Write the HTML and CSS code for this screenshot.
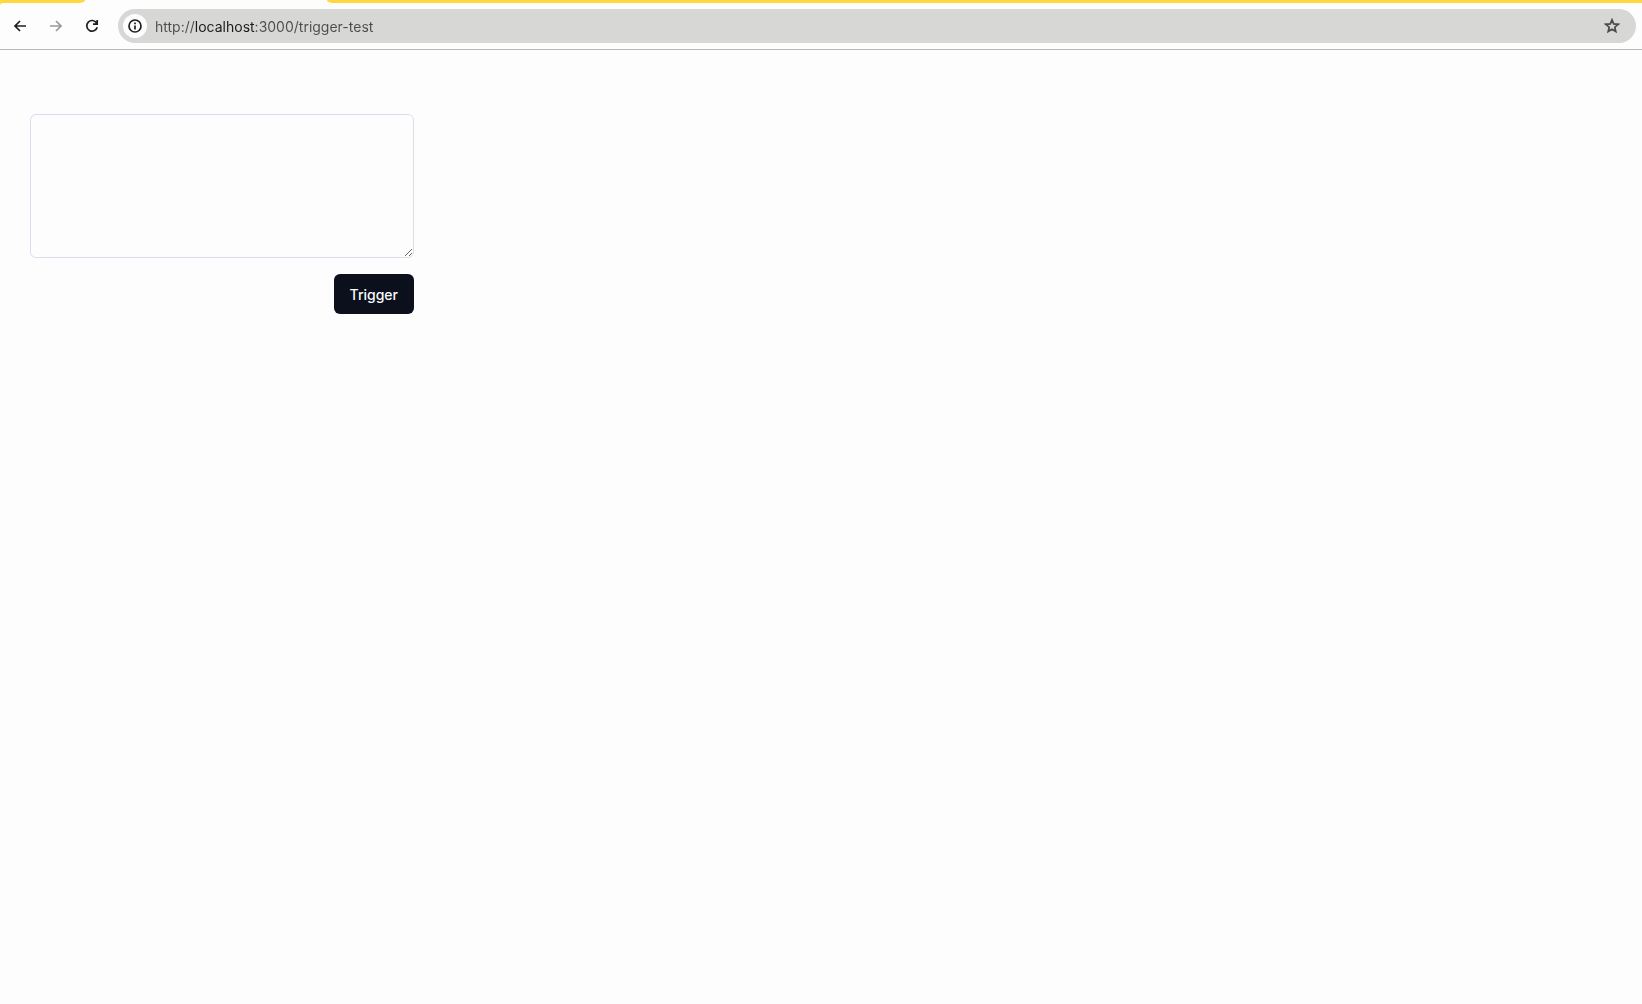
FILE: index.html
```html
<!DOCTYPE html>
<html lang="en">
<head>
  <meta charset="UTF-8">
  <meta name="viewport" content="width=device-width, initial-scale=1.0">
  <title>Trigger Test</title>
  <link rel="stylesheet" href="styles.css">
</head>
<body>
  <header class="browser">
    <div class="tab-strip">
      <div class="tabs-before"></div>
      <div class="active-tab"></div>
      <div class="tabs-after"></div>
    </div>
    <nav class="toolbar">
      <button type="button" class="nav-button" aria-label="Back">
        <svg viewBox="0 0 16 16"><path d="M14 8H3M8 3L3 8l5 5"/></svg>
      </button>
      <button type="button" class="nav-button" aria-label="Forward" disabled>
        <svg viewBox="0 0 16 16"><path d="M2 8h11M8 3l5 5-5 5"/></svg>
      </button>
      <button type="button" class="nav-button" aria-label="Reload">
        <svg viewBox="0 0 16 16"><path d="M12.6 5A5.3 5.3 0 1 0 13.2 9.2M13.2 2v4.2H9"/></svg>
      </button>
      <div class="address-bar">
        <button type="button" class="site-info" aria-label="View site information">
          <svg viewBox="0 0 16 16"><circle cx="8" cy="8" r="6"/><path d="M8 7.4v4M8 4.6v1.6"/></svg>
        </button>
        <input type="text" class="url" aria-label="Address" value="http://localhost:3000/trigger-test">
        <button type="button" class="bookmark" aria-label="Bookmark this page">
          <svg viewBox="0 0 16 16"><path d="M8 1.8l1.7 4.1 4.5.4-3.4 2.9 1 4.4L8 11.3l-3.8 2.3 1-4.4-3.4-2.9 4.5-.4z"/></svg>
        </button>
      </div>
    </nav>
  </header>
  <main>
    <form class="trigger-form">
      <textarea class="message" aria-label="Message"></textarea>
      <button type="button" class="trigger-button">Trigger</button>
    </form>
  </main>
</body>
</html>
```
FILE: styles.css
```css
* {
  box-sizing: border-box;
}
body {
  margin: 0;
  background-color: #fdfdfd;
  font-family: Inter, sans-serif;
}
button {
  padding: 0;
  border: none;
  background: none;
  font-family: inherit;
  cursor: pointer;
}
svg {
  display: block;
  width: 16px;
  height: 16px;
  fill: none;
  stroke: currentColor;
  stroke-width: 1.7;
}

/* browser bar */
.browser {
  background-color: #ffd83d;
}
.tab-strip {
  display: flex;
  height: 3px;
  background-color: #fdfdfd;
}
.tabs-before {
  width: 85px;
  background-color: #ffd83d;
  border-bottom-right-radius: 6px 3px;
}
.active-tab {
  width: 242px;
}
.tabs-after {
  flex: 1;
  background-color: #ffd83d;
  border-bottom-left-radius: 6px 3px;
}
.toolbar {
  display: flex;
  align-items: center;
  height: 47px;
  padding: 0 6px 0 12px;
  background-color: #fdfdfd;
  border-bottom: 1px solid #b8b8b4;
  border-top-left-radius: 3px;
}
.nav-button {
  width: 16px;
  margin-right: 20px;
  color: #1f1f1f;
}
.nav-button:disabled {
  color: #999999;
}
.nav-button:nth-of-type(3) {
  margin-right: 18px;
}
.address-bar {
  display: flex;
  flex: 1;
  align-items: center;
  height: 34px;
  padding: 0 16px 0 5px;
  background-color: #d7d7d5;
  border-radius: 17px;
}
.site-info {
  display: flex;
  align-items: center;
  justify-content: center;
  width: 24px;
  height: 24px;
  background-color: #fdfdfd;
  border-radius: 50%;
  color: #1f1f1f;
}
.url {
  flex: 1;
  height: 24px;
  margin-left: 8px;
  padding: 0;
  border: none;
  outline: none;
  /* host name is darker than the rest of the address */
  background: linear-gradient(to right, #4d4d50 40px, #1b1b1b 40px, #1b1b1b 100px, #4d4d50 100px);
  background-clip: text;
  color: transparent;
  caret-color: #1b1b1b;
  font-family: inherit;
  font-size: 14px;
}
.bookmark {
  color: #4a4a4a;
}

/* page */
.trigger-form {
  display: flex;
  flex-direction: column;
  align-items: flex-end;
  gap: 16px;
  max-width: 384px;
  margin: 64px 30px;
}
.message {
  display: block;
  width: 100%;
  height: 144px;
  padding: 8px 12px;
  background-color: transparent;
  border: 1px solid #d8dfea;
  border-radius: 6px;
  font-family: inherit;
  font-size: 14px;
}
.trigger-button {
  height: 40px;
  padding: 0 16px;
  background-color: #0b101c;
  border-radius: 6px;
  color: #f8fafc;
  font-size: 14px;
  font-weight: 500;
}
```
